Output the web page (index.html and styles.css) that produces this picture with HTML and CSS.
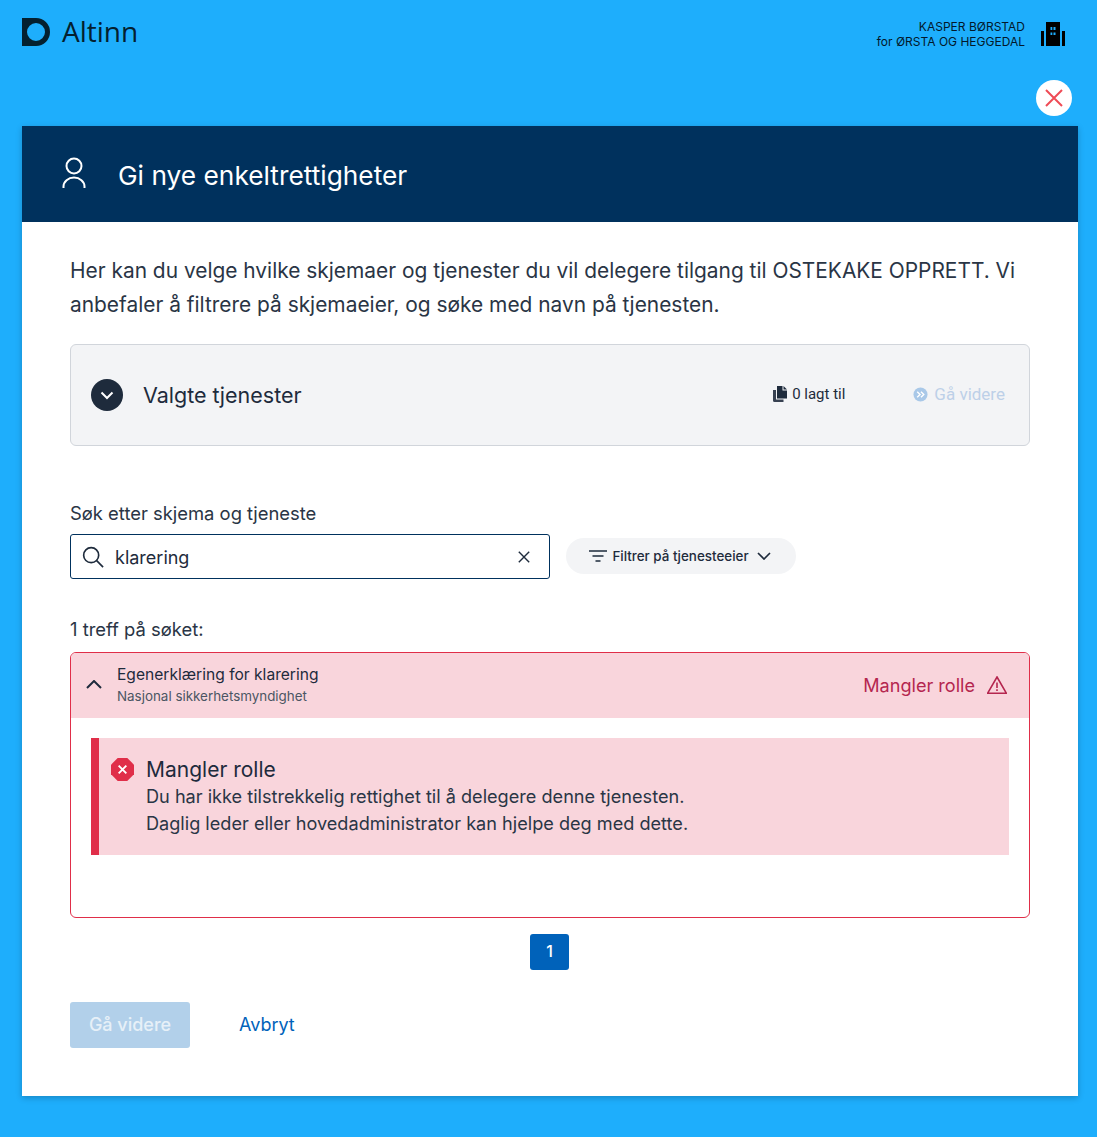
FILE: index.html
```html
<!DOCTYPE html>
<html lang="no">
<head>
<meta charset="utf-8">
<title>Altinn</title>
<link rel="stylesheet" href="styles.css">
</head>
<body>
<header class="topbar">
  <div class="brand">
    <svg class="brand-mark" viewBox="0 0 28 28"><path fill-rule="evenodd" d="M0 0H14A14 14 0 0 1 14 28H0ZM14 5A9 9 0 1 0 14 23A9 9 0 1 0 14 5Z"/></svg>
    <span class="brand-name">Altinn</span>
  </div>
  <div class="account">
    <div class="account-text"><div>KASPER BØRSTAD</div><div>for ØRSTA OG HEGGEDAL</div></div>
    <svg class="account-icon" viewBox="0 0 24 24"><path fill-rule="evenodd" d="M5 0H19V24H5ZM9.500 5V8H11.300V5ZM12.500 5V8H14.500V5ZM9.500 10.500V13H11.300V10.500ZM12.500 10.500V13H14.500V10.500Z"/><rect x="0" y="9" width="3" height="15"/><rect x="21" y="9" width="3" height="15"/></svg>
  </div>
</header>
<div class="close-row">
  <button class="close-btn" aria-label="Lukk"><svg viewBox="0 0 18 18"><path d="M1 1L17 17M17 1L1 17"/></svg></button>
</div>
<main class="panel">
  <div class="panel-head">
    <svg class="person" viewBox="0 0 24 32"><circle cx="12" cy="9" r="7.500"/><path d="M1.500 31V29.500A10.500 9 0 0 1 22.500 29.500V31"/></svg>
    <h1>Gi nye enkeltrettigheter</h1>
  </div>
  <div class="panel-body">
    <p class="intro">Her kan du velge hvilke skjemaer og tjenester du vil delegere tilgang til OSTEKAKE OPPRETT. Vi anbefaler å filtrere på skjemaeier, og søke med navn på tjenesten.</p>
    <section class="selected">
      <span class="round-chevron"><svg viewBox="0 0 14 9"><path d="M1.500 1.500L7 7L12.500 1.500"/></svg></span>
      <h2>Valgte tjenester</h2>
      <span class="added"><svg viewBox="0 0 14 16"><path class="doc-back" d="M0 4H3V13.500H10.500V16H1.500A1.500 1.500 0 0 1 0 14.500Z"/><path d="M4 0H9.500V4.500H14V12.500H4Z"/><path d="M10.500 0L14 3.500H10.500Z"/></svg>0 lagt til</span>
      <span class="next-disabled"><svg viewBox="0 0 16 16"><circle cx="8" cy="8" r="7.500"/><path class="chev" d="M4.500 5L7.500 8L4.500 11M8.500 5L11.500 8L8.500 11"/></svg>Gå videre</span>
    </section>
    <label class="search-label" for="q">Søk etter skjema og tjeneste</label>
    <div class="search-row">
      <div class="search-box">
        <svg class="search-icon" viewBox="0 0 24 24"><circle cx="10" cy="10" r="8.200"/><path d="M16 16L23 23"/></svg>
        <input id="q" class="search-input" value="klarering">
        <svg class="clear-icon" viewBox="0 0 12 12"><path d="M.8 .8L11.200 11.200M11.200 .8L.8 11.200"/></svg>
      </div>
      <button class="filter-btn">
        <svg class="filter-icon" viewBox="0 0 18 12"><path d="M0 1H18M3.500 6H14.500M6.500 11H11.500"/></svg>
        Filtrer på tjenesteeier
        <svg class="filter-chev" viewBox="0 0 14 8"><path d="M1 1L7 7L13 1"/></svg>
      </button>
    </div>
    <p class="count">1 treff på søket:</p>
    <article class="result">
      <div class="result-head">
        <svg class="up-chev" viewBox="0 0 16 9"><path d="M1 8L8 1L15 8"/></svg>
        <div class="result-titles">
          <div class="result-title">Egenerklæring for klarering</div>
          <div class="result-owner">Nasjonal sikkerhetsmyndighet</div>
        </div>
        <span class="result-status">Mangler rolle
          <svg viewBox="0 0 20 18"><path d="M10 1L19.300 17.200H.7Z"/><path d="M10 6.500V12M10 13.300V15"/></svg>
        </span>
      </div>
      <div class="result-body">
        <div class="alert">
          <svg class="alert-icon" viewBox="0 0 24 24"><path class="oct" d="M7 0H17L24 7V17L17 24H7L0 17V7Z"/><path class="x" d="M8 8L16 16M16 8L8 16"/></svg>
          <div>
            <div class="alert-title">Mangler rolle</div>
            <div class="alert-text">Du har ikke tilstrekkelig rettighet til å delegere denne tjenesten.</div>
            <div class="alert-text">Daglig leder eller hovedadministrator kan hjelpe deg med dette.</div>
          </div>
        </div>
      </div>
    </article>
    <nav class="pager"><span class="page">1</span></nav>
    <div class="actions">
      <button class="primary" disabled>Gå videre</button>
      <a class="cancel" href="#">Avbryt</a>
    </div>
  </div>
</main>
</body>
</html>
```
FILE: styles.css
```css
* { box-sizing: border-box; }
html, body { margin: 0; }
body {
  background: #1eaefc;
  font-family: Inter, "Liberation Sans", sans-serif;
  color: #1e2b3c;
  height: 1137px;
  overflow: hidden;
}
.topbar {
  height: 80px;
  padding: 18px 32px 0 22px;
  display: flex;
  justify-content: space-between;
  align-items: flex-start;
}
.brand { display: flex; align-items: center; gap: 12px; color: #04202f; height: 28px; }
.brand-mark { width: 28px; height: 28px; fill: #04202f; }
.brand-name { font-family: "Open Sans", sans-serif; font-size: 28px; line-height: 28px; margin-top: -2px; }
.account { display: flex; align-items: flex-start; gap: 16px; color: #03182a; height: 30px; margin-top: 4px; }
.account-text { font-size: 12px; line-height: 15px; text-align: right; margin-top: -3px; }
.account-icon { width: 24px; height: 24px; fill: #000; }
.close-row { height: 46px; padding-right: 25px; display: flex; justify-content: flex-end; align-items: flex-start; }
.close-btn {
  width: 36px; height: 36px; border-radius: 50%; border: 0; background: #fff; padding: 0;
  display: flex; align-items: center; justify-content: center;
}
.close-btn svg { width: 18px; height: 18px; fill: none; stroke: #ef4b55; stroke-width: 2; }
.panel {
  margin: 0 19px 0 22px;
  width: 1056px;
  background: #fff;
  box-shadow: 0 2px 6px rgba(0, 0, 0, .22);
}
.panel-head {
  height: 96px;
  background: #00315d;
  color: #fff;
  display: flex;
  align-items: center;
  padding-left: 40px;
  gap: 32px;
}
.person { width: 24px; height: 32px; fill: none; stroke: #fff; stroke-width: 2; margin-top: -2px; }
.panel-head h1 { margin: 3px 0 0; font-size: 26.300px; font-weight: 400; line-height: 32px; }
.panel-body { padding: 32px 48px 48px; }
.intro { margin: 0; font-size: 20.900px; line-height: 34px; color: #2a3545; }
.selected {
  margin-top: 22px;
  height: 102px;
  border: 1px solid #d1d5db;
  border-radius: 6px;
  background: #f3f4f6;
  display: flex;
  align-items: center;
  padding: 0 24px 0 20px;
}
.round-chevron {
  width: 32px; height: 32px; border-radius: 50%; background: #1e2b3c;
  display: flex; align-items: center; justify-content: center; flex: none;
}
.round-chevron svg { width: 14px; height: 9px; fill: none; stroke: #fff; stroke-width: 2; }
.selected h2 { margin: -1px 0 0 20px; font-size: 21.500px; font-weight: 400; color: #1e2b3c; flex: 1; line-height: 28px; }
.added {
  display: flex; align-items: center; gap: 5px; margin-top: -2px;
  font-family: Roboto, sans-serif; font-size: 15px; color: #1e2b3c; margin-right: 68px;
}
.added svg { width: 14px; height: 16px; fill: #1e2b3c; }
.doc-back { fill: #374151; }
.next-disabled { display: flex; align-items: center; gap: 6px; font-family: Roboto, sans-serif; font-size: 17px; color: #bdd0e8; margin-top: -2px; }
.next-disabled svg { width: 15px; height: 15px; fill: #a9c8e8; }
.chev { fill: none; stroke: #fff; stroke-width: 1.500; }
.search-label { display: block; margin-top: 55px; font-size: 18.400px; line-height: 24px; color: #2a3545; }
.search-row { display: flex; align-items: flex-start; gap: 16px; margin-top: 9px; }
.search-box {
  width: 480px; height: 45px; border: 1px solid #00315d; border-radius: 3px;
  display: flex; align-items: center; padding: 0 19px 0 11px; background: #fff;
}
.search-icon { width: 22px; height: 22px; fill: none; stroke: #1e2b3c; stroke-width: 1.800; flex: none; }
.search-input { flex: 1; min-width: 0; border: 0; outline: 0; padding: 2px 0 0; margin-left: 11px; font: 400 18px Inter, sans-serif; color: #1e2b3c; background: transparent; }
.clear-icon { width: 12px; height: 12px; fill: none; stroke: #1e2b3c; stroke-width: 1.400; flex: none; }
.filter-btn {
  width: 230px; height: 36px; margin-top: 4px; border: 0; border-radius: 18px; background: #f3f4f6;
  display: flex; align-items: center; justify-content: center; gap: 5px;
  font: 500 13.400px Inter, sans-serif; color: #1e2b3c; padding: 0 2px 0 0;
}
.filter-icon { width: 18px; height: 12px; fill: none; stroke: #1e2b3c; stroke-width: 1.600; }
.filter-chev { width: 14px; height: 8px; fill: none; stroke: #1e2b3c; stroke-width: 1.700; margin-left: 3px; }
.count { margin: 38px 0 0; font-size: 18.400px; line-height: 24px; color: #2a3545; }
.result { margin-top: 11px; height: 266px; border: 1px solid #e02e49; border-radius: 6px; overflow: hidden; }
.result-head {
  height: 65px; background: #f9d5dc; display: flex; align-items: center; padding: 0 22px 0 15px;
}
.up-chev { width: 16px; height: 9px; fill: none; stroke: #1e2b3c; stroke-width: 2; flex: none; margin-top: -2px; }
.result-titles { margin-left: 15px; flex: 1; margin-top: -2px; }
.result-title { font-size: 15.600px; font-weight: 400; line-height: 22px; }
.result-owner { font-size: 13.400px; line-height: 20px; color: #4b5563; }
.result-status { display: flex; align-items: center; gap: 12px; font-size: 18.100px; color: #b5264f; margin-top: -2px; }
.result-status svg { width: 20px; height: 18px; fill: none; stroke: #b5264f; stroke-width: 1.600; }
.result-body { padding: 20px 20px 0; }
.alert {
  height: 117px; background: #f9d5dc; border-left: 8px solid #e02e49;
  display: flex; padding: 18px 12px 0 12px; gap: 12px;
}
.alert-icon { width: 23px; height: 23px; flex: none; margin-top: 2px; }
.oct { fill: #e02e49; }
.x { fill: none; stroke: #fff; stroke-width: 2; }
.alert-title { font-size: 21px; font-weight: 400; line-height: 27px; }
.alert-text { font-size: 18.140px; line-height: 27px; color: #2a3545; }
.pager { display: flex; justify-content: center; margin-top: 16px; padding-right: 2px; }
.page {
  width: 39px; height: 36px; border-radius: 3px; background: #0062ba; color: #fff; padding: 0 0 2px 1px;
  display: flex; align-items: center; justify-content: center; font-size: 16px; font-weight: 500;
}
.actions { display: flex; align-items: center; margin-top: 32px; gap: 49px; }
.primary {
  width: 120px; height: 46px; border: 0; border-radius: 3px; background: #b2d0ea; color: #e7f0f8;
  font: 500 18px Inter, sans-serif; padding: 0 0 2px;
}
.cancel { font-size: 18px; color: #0062ba; text-decoration: none; margin-bottom: 2px; }
```
